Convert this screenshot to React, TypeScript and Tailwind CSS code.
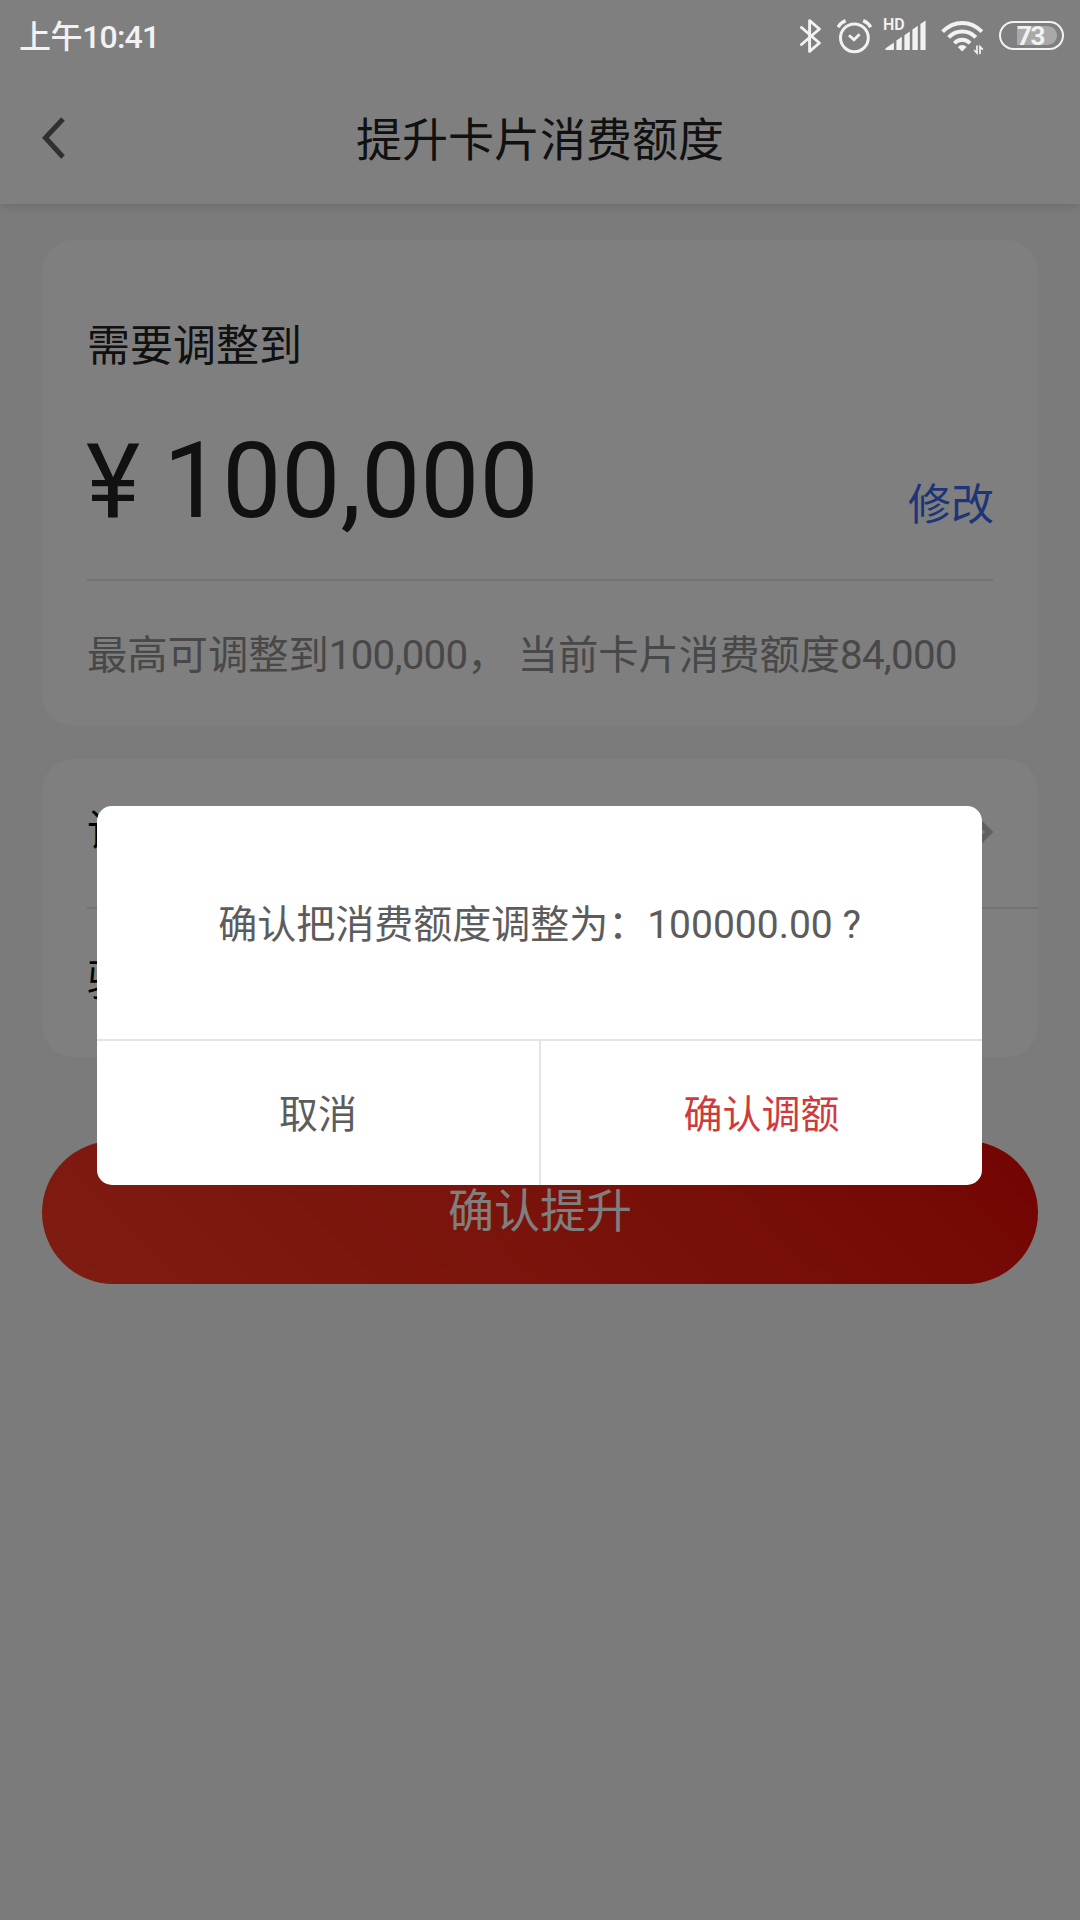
import { ReactNode, useState } from "react";

type RowProps = {
  label: string;
  withArrow?: boolean;
};

type DialogProps = {
  message: string;
  onClose: () => void;
};

function BluetoothIcon() {
  return (
    <svg width="24" height="38" viewBox="0 0 24 38" fill="none" stroke="#f2f2f2" strokeWidth="2.9">
      <path d="M1.5 10.5 L19.4 26 L9.6 34.4 V3.6 L19.4 12 L1.5 27.5" strokeLinejoin="round" strokeLinecap="round" />
    </svg>
  );
}

function AlarmIcon() {
  return (
    <svg width="36" height="38" viewBox="0 0 36 38" fill="none" stroke="#f2f2f2">
      <circle cx="17.4" cy="20.8" r="13.9" strokeWidth="3" />
      <path d="M1.2 10.3 C2.9 7 5.4 4.8 8.6 3.6" strokeWidth="3.6" />
      <path d="M33.6 10.3 C31.9 7 29.4 4.8 26.2 3.6" strokeWidth="3.6" />
      <path d="M12 18.2 L17 22.8 L22.6 17.2" strokeWidth="2.8" />
    </svg>
  );
}

function SignalIcon() {
  return (
    <svg width="42" height="38" viewBox="0 0 42 38" fill="#f2f2f2">
      <path d="M0.4 33 V31.6 L8.9 25.4 V33 Z" />
      <path d="M11.4 33 V23.6 L16.8 19.8 V33 Z" />
      <path d="M19.4 33 V18.2 L24.8 14.4 V33 Z" />
      <path d="M27.4 33 V12.6 L32.8 8.8 V33 Z" />
      <path d="M35.4 33 V7 L40.6 3.4 V33 Z" />
    </svg>
  );
}

function WifiIcon() {
  return (
    <svg width="44" height="38" viewBox="0 0 44 38" fill="none" stroke="#f2f2f2">
      <path d="M1.6 14.6 C13 3 29.5 3 40.8 14.6" strokeWidth="4" />
      <path d="M7.6 20.4 C15.2 12.6 27.2 12.6 34.8 20.4" strokeWidth="4" />
      <path d="M13.4 26.2 C17.8 21.6 24.6 21.6 29 26.2" strokeWidth="3.8" />
      <path d="M16.8 30 C19.4 27.3 23.2 27.3 25.6 30 L21.2 34.4 Z" fill="#f2f2f2" stroke="none" />
      <path d="M33.2 33 L36 36 V28.4" strokeWidth="1.7" />
      <path d="M39 37 V29.6 L41.8 32.6" strokeWidth="1.7" />
    </svg>
  );
}

function StatusBar() {
  return (
    <div className="relative z-20 flex h-[72px] items-start justify-between text-[#f2f2f2]">
      <div className="flex pt-[13px] pl-[19px] text-[32px] leading-[48px] font-medium">
        <span className="tracking-[-0.4px]">上午</span>
        <span className="tracking-[-0.8px]">10:41</span>
      </div>
      <div className="flex pt-[17px] pr-[16px]">
        <BluetoothIcon />
        <div className="ml-[13px]">
          <AlarmIcon />
        </div>
        <div className="relative ml-[12px]">
          <SignalIcon />
          <span className="absolute -top-px -left-[2px] text-[16px] leading-[18px] font-semibold">
            HD
          </span>
        </div>
        <div className="ml-[14px]">
          <WifiIcon />
        </div>
        <div className="mt-[4px] ml-[14px] flex h-[29px] w-[65px] rounded-full border-[2.5px] border-[#f2f2f2] p-[3px]">
          <div className="ml-[13px] flex w-[40px] items-center justify-start rounded-r-full bg-[#a9a9a9]">
            <span className="text-[26px] leading-[20px] font-bold tracking-[-1.4px]">73</span>
          </div>
        </div>
      </div>
    </div>
  );
}

function Header({ children }: { children: ReactNode }) {
  return (
    <div className="relative bg-white shadow-[0_2px_10px_rgba(0,0,0,0.12)]">
      <StatusBar />
      <div className="relative flex h-[132px] items-center justify-center">
        <svg
          className="absolute top-[44px] left-[40px]"
          width="28"
          height="44"
          viewBox="0 0 28 44"
          fill="none"
          stroke="#606060"
          strokeWidth="5"
        >
          <path d="M23 3 L5.4 21.8 L23 41" />
        </svg>
        <h1 className="pt-[4px] text-[46px] leading-[60px] text-[#222]">{children}</h1>
      </div>
    </div>
  );
}

function FormRow({ label, withArrow }: RowProps) {
  return (
    <div className="flex h-[148px] items-center justify-between pr-[45px] pb-[3px]">
      <span className="text-[43.2px] leading-[60px] text-black">{label}</span>
      {withArrow && (
        <svg width="20" height="30" viewBox="0 0 20 30" fill="none" stroke="#c0c0c0" strokeWidth="6">
          <path d="M3 2 L16 15 L3 28" />
        </svg>
      )}
    </div>
  );
}

function ConfirmDialog({ message, onClose }: DialogProps) {
  return (
    <div className="absolute inset-0 z-10 bg-black/50 pt-[806px] pl-[97px]">
      <div className="h-[379px] w-[885px] overflow-hidden rounded-[15px] bg-white text-[39px] text-[#5c5c5c]">
        <div className="flex h-[235px] items-center justify-center border-b-2 border-[#e5e5e5] pt-[6px]">
          <p className="whitespace-pre">{message}</p>
        </div>
        <div className="flex h-[144px]">
          <button className="w-[444px] border-r-2 border-[#e5e5e5] pt-[5px]" onClick={onClose}>
            取消
          </button>
          <button className="flex-1 pt-[5px] text-[#cf3b3b]" onClick={onClose}>
            确认调额
          </button>
        </div>
      </div>
    </div>
  );
}

function App() {
  const [showDialog, setShowDialog] = useState(true);

  return (
    <div className="relative h-[1920px] w-[1080px] overflow-hidden bg-[#f6f6f6] font-[Roboto,'Noto_Sans_CJK_SC',sans-serif]">
      <Header>提升卡片消费额度</Header>

      <div className="flex flex-col px-[42px] pt-[36px]">
        <div className="h-[486px] rounded-[32px] bg-white px-[45px] pt-[74px]">
          <p className="text-[43px] leading-[64px] text-[#222]">需要调整到</p>
          <div className="flex h-[203px] items-end justify-between border-b-2 border-[#e4e4e4]">
            <div className="flex items-baseline pb-[35px] text-[105.2px] leading-[124px] text-[#222]">
              <span className="mr-[23px] -ml-px text-[103px]">¥</span>
              <span>100,000</span>
            </div>
            <button className="-mr-px pb-[44px] text-[43px] leading-[60px] text-[#3c68f0]">修改</button>
          </div>
          <p className="pt-[45px] text-[40.3px] leading-[60px] whitespace-pre text-[#909090]">
            最高可调整到<span className="tracking-[-0.75px]">100,000</span>，
            {" "}当前卡片消费额度<span className="tracking-[-0.75px]">84,000</span>
          </p>
        </div>

        <div className="mt-[33px] rounded-[32px] bg-white pl-[45px]">
          <FormRow label="请" withArrow />
          <div className="h-[2px] bg-[#e4e4e4]" />
          <FormRow label="验" />
        </div>

        <button
          className="mt-[84px] h-[143px] rounded-full bg-linear-45 from-[#ff3822] to-[#e60606] pb-[2px] text-[46px] text-white"
          onClick={() => setShowDialog(true)}
        >
          确认提升
        </button>
      </div>

      {showDialog && (
        <ConfirmDialog message="确认把消费额度调整为：100000.00 ?" onClose={() => setShowDialog(false)} />
      )}
    </div>
  );
}

export default App;
